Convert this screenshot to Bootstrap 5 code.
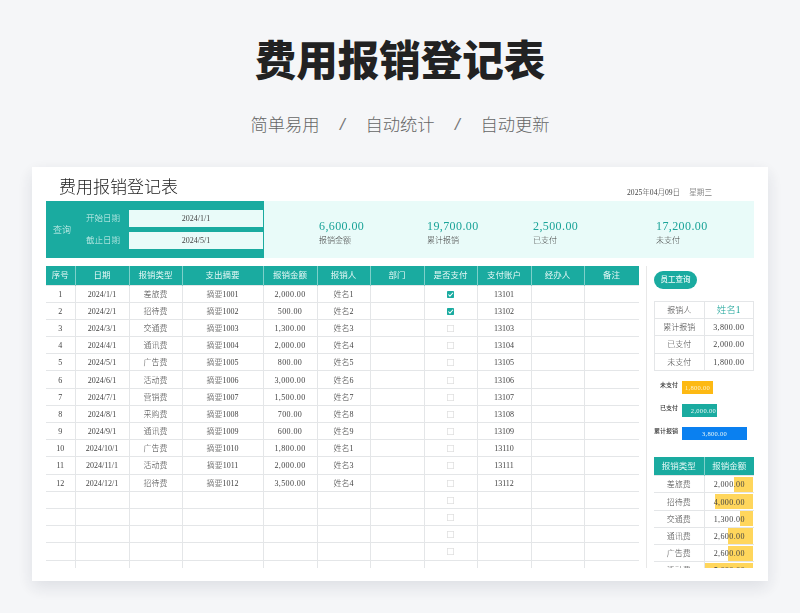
<!DOCTYPE html>
<html lang="zh-CN">
<head>
<meta charset="utf-8">
<title>费用报销登记表</title>
<link rel="stylesheet" href="https://cdn.jsdelivr.net/npm/bootstrap@5.3.0/dist/css/bootstrap.min.css">
<style>
html,body{height:100%;overflow:hidden}
body{background:#f5f6f8;font-family:"Liberation Serif","Noto Sans CJK SC",serif;color:#444;font-weight:300}
.hero{height:167px;text-align:center;font-family:"Noto Sans CJK SC","Liberation Sans",sans-serif}
.hero-title{font-size:41.5px;line-height:50px;font-weight:900;color:#222;padding-top:33px;margin:0;height:83px}
.hero-sub{font-size:17.3px;line-height:24px;color:#666;margin-top:29px;gap:20.5px;font-weight:300}
.hero-slash{font-style:italic;font-family:"Liberation Sans",sans-serif;color:#777;font-weight:400}
.sheet{margin:0 32px;height:414px;background:#fff;box-shadow:0 6px 16px rgba(60,70,90,.13);padding:0 14px;opacity:.999}
.sheet-head{height:34px}
.sheet-title{font-size:17px;line-height:24px;color:#222;margin:9px 0 0 13px;font-weight:300}
.sheet-date{font-size:7.6px;margin:20px 42px 0 0;color:#444;gap:9px}
.band{height:57px;background:#e9fbf9}
.query{width:218px;background:#1aaba0;color:#d5f3ef;font-size:9px;padding:0 1px 0 7px}
.query-word{width:26px;padding-top:2px}
.query-fields{gap:5px;flex:1}
.query-label{width:50px;text-align:right;padding-right:9px;font-size:8.5px}
.query-input{flex:1;height:17px;background:#e9fbf9;color:#444;font-size:8px;line-height:17px;text-align:center}
.stat-wrap{flex:1;display:grid;grid-template-columns:108px 106px 123px 1fr;padding-left:55px;padding-top:18px}
.stat-num{font-size:12px;line-height:14px;color:#1aa398;letter-spacing:.4px}
.stat-cap{font-size:8px;line-height:12px;margin-top:2px;color:#444}
.body-row{margin-top:8px;height:302px}
.left-pane{width:593px;height:302px;overflow:hidden}
.right-pane{margin-left:7px;flex:1;border-left:1px solid #e8e8e8;padding-left:7px;height:302px;overflow:hidden}
.tbl{table-layout:fixed;margin:0;border-collapse:collapse;width:100%;font-size:8px;color:#444}
.tbl>*>tr>*{padding:1px 0 0;height:17.2px;line-height:15px;text-align:center;vertical-align:middle;border:1px solid #e4e6e8;background:#fff;color:#444;box-shadow:none;font-weight:300;white-space:nowrap}
.tbl>thead>tr>th{background:#1aaba0;color:#e6f8f6;height:19px;font-size:8.5px;border-color:#7fd0ca;border-top:0;border-bottom:0;padding:0;font-weight:400}
.tbl>*>tr>*:first-child{border-left:0}
.tbl>*>tr>*:last-child{border-right:none}
.left-pane .tbl>*>tr>*:last-child{border-right:1px solid #e4e6e8}
.amt{letter-spacing:.4px}
.ck{display:block;margin:auto;width:7px;height:7px}
.pill{width:43px;height:18px;border-radius:9px;background:#1aaba0;color:#eafaf8;font-size:7.5px;line-height:18px;text-align:center;margin-top:5px;font-weight:500}
.panel-tbl{margin-top:12px;width:100%}
.panel-tbl.tbl>*>tr>*:first-child{border-left:1px solid #e4e6e8}
.panel-tbl.tbl>*>tr>*:last-child{border-right:1px solid #e4e6e8}
.accent{color:#1aa398!important;font-size:9.5px}
.bars{margin-top:10px;gap:10px;height:76px}
.bar-row{height:13px;font-size:6px;color:#333;font-weight:500}
.bar-lab{width:24px;text-align:right;margin-right:4px;white-space:nowrap}
.bar{height:13px;line-height:13px;text-align:center;color:#e9f7f6;font-weight:300;font-size:6.5px;letter-spacing:.3px}
.b-y{width:31px;background:#fdb913;color:#fff3cf}
.b-t{width:35px;background:#1aaba0;text-align:right;padding-right:1px}
.b-b{width:65px;background:#0a80f0}
.type-tbl{margin-top:0;width:100%}
.type-tbl>thead>tr>th{border-color:#7fd0ca}
.data-cell{position:relative}
.data-fill{position:absolute;top:.5px;bottom:.5px;right:1px;background:#ffd65c}
.data-num{position:relative}
</style>
</head>
<body>
<header class="hero">
  <h1 class="hero-title">费用报销登记表</h1>
  <div class="hero-sub d-flex justify-content-center"><span>简单易用</span><span class="hero-slash">/</span><span>自动统计</span><span class="hero-slash">/</span><span>自动更新</span></div>
</header>
<main class="sheet">
  <div class="sheet-head d-flex justify-content-between">
    <div class="sheet-title">费用报销登记表</div>
    <div class="sheet-date d-flex"><span>2025年04月09日</span><span>星期三</span></div>
  </div>
  <section class="band d-flex">
    <div class="query d-flex align-items-center">
      <div class="query-word">查询</div>
      <div class="query-fields d-flex flex-column">
        <div class="d-flex align-items-center"><div class="query-label">开始日期</div><div class="query-input">2024/1/1</div></div>
        <div class="d-flex align-items-center"><div class="query-label">截止日期</div><div class="query-input">2024/5/1</div></div>
      </div>
    </div>
    <div class="stat-wrap">
      <div><div class="stat-num">6,600.00</div><div class="stat-cap">报销金额</div></div>
      <div><div class="stat-num">19,700.00</div><div class="stat-cap">累计报销</div></div>
      <div><div class="stat-num">2,500.00</div><div class="stat-cap">已支付</div></div>
      <div><div class="stat-num">17,200.00</div><div class="stat-cap">未支付</div></div>
    </div>
  </section>
  <div class="body-row d-flex">
    <div class="left-pane">
      <table class="table tbl">
        <colgroup><col style="width:29px"><col style="width:54px"><col style="width:53px"><col style="width:81px"><col style="width:54px"><col style="width:53px"><col style="width:54px"><col style="width:53px"><col style="width:54px"><col style="width:53px"><col style="width:55px"></colgroup>
        <thead><tr><th>序号</th><th>日期</th><th>报销类型</th><th>支出摘要</th><th>报销金额</th><th>报销人</th><th>部门</th><th>是否支付</th><th>支付账户</th><th>经办人</th><th>备注</th></tr></thead>
        <tbody>
          <tr><td>1</td><td>2024/1/1</td><td>差旅费</td><td>摘要1001</td><td class="amt">2,000.00</td><td>姓名1</td><td></td><td><svg class="ck" viewBox="0 0 10 10"><rect width="10" height="10" rx="1" fill="#1aaba0"/><path d="M2 5l2.2 2.4L8.5 2.5" fill="none" stroke="#fff" stroke-width="1.5"/></svg></td><td>13101</td><td></td><td></td></tr>
          <tr><td>2</td><td>2024/2/1</td><td>招待费</td><td>摘要1002</td><td class="amt">500.00</td><td>姓名2</td><td></td><td><svg class="ck" viewBox="0 0 10 10"><rect width="10" height="10" rx="1" fill="#1aaba0"/><path d="M2 5l2.2 2.4L8.5 2.5" fill="none" stroke="#fff" stroke-width="1.5"/></svg></td><td>13102</td><td></td><td></td></tr>
          <tr><td>3</td><td>2024/3/1</td><td>交通费</td><td>摘要1003</td><td class="amt">1,300.00</td><td>姓名3</td><td></td><td><svg class="ck" viewBox="0 0 10 10"><rect x=".5" y=".5" width="9" height="9" fill="#fff" stroke="#ddd"/></svg></td><td>13103</td><td></td><td></td></tr>
          <tr><td>4</td><td>2024/4/1</td><td>通讯费</td><td>摘要1004</td><td class="amt">2,000.00</td><td>姓名4</td><td></td><td><svg class="ck" viewBox="0 0 10 10"><rect x=".5" y=".5" width="9" height="9" fill="#fff" stroke="#ddd"/></svg></td><td>13104</td><td></td><td></td></tr>
          <tr><td>5</td><td>2024/5/1</td><td>广告费</td><td>摘要1005</td><td class="amt">800.00</td><td>姓名5</td><td></td><td><svg class="ck" viewBox="0 0 10 10"><rect x=".5" y=".5" width="9" height="9" fill="#fff" stroke="#ddd"/></svg></td><td>13105</td><td></td><td></td></tr>
          <tr><td>6</td><td>2024/6/1</td><td>活动费</td><td>摘要1006</td><td class="amt">3,000.00</td><td>姓名6</td><td></td><td><svg class="ck" viewBox="0 0 10 10"><rect x=".5" y=".5" width="9" height="9" fill="#fff" stroke="#ddd"/></svg></td><td>13106</td><td></td><td></td></tr>
          <tr><td>7</td><td>2024/7/1</td><td>营销费</td><td>摘要1007</td><td class="amt">1,500.00</td><td>姓名7</td><td></td><td><svg class="ck" viewBox="0 0 10 10"><rect x=".5" y=".5" width="9" height="9" fill="#fff" stroke="#ddd"/></svg></td><td>13107</td><td></td><td></td></tr>
          <tr><td>8</td><td>2024/8/1</td><td>采购费</td><td>摘要1008</td><td class="amt">700.00</td><td>姓名8</td><td></td><td><svg class="ck" viewBox="0 0 10 10"><rect x=".5" y=".5" width="9" height="9" fill="#fff" stroke="#ddd"/></svg></td><td>13108</td><td></td><td></td></tr>
          <tr><td>9</td><td>2024/9/1</td><td>通讯费</td><td>摘要1009</td><td class="amt">600.00</td><td>姓名9</td><td></td><td><svg class="ck" viewBox="0 0 10 10"><rect x=".5" y=".5" width="9" height="9" fill="#fff" stroke="#ddd"/></svg></td><td>13109</td><td></td><td></td></tr>
          <tr><td>10</td><td>2024/10/1</td><td>广告费</td><td>摘要1010</td><td class="amt">1,800.00</td><td>姓名1</td><td></td><td><svg class="ck" viewBox="0 0 10 10"><rect x=".5" y=".5" width="9" height="9" fill="#fff" stroke="#ddd"/></svg></td><td>13110</td><td></td><td></td></tr>
          <tr><td>11</td><td>2024/11/1</td><td>活动费</td><td>摘要1011</td><td class="amt">2,000.00</td><td>姓名3</td><td></td><td><svg class="ck" viewBox="0 0 10 10"><rect x=".5" y=".5" width="9" height="9" fill="#fff" stroke="#ddd"/></svg></td><td>13111</td><td></td><td></td></tr>
          <tr><td>12</td><td>2024/12/1</td><td>招待费</td><td>摘要1012</td><td class="amt">3,500.00</td><td>姓名4</td><td></td><td><svg class="ck" viewBox="0 0 10 10"><rect x=".5" y=".5" width="9" height="9" fill="#fff" stroke="#ddd"/></svg></td><td>13112</td><td></td><td></td></tr>
          <tr><td></td><td></td><td></td><td></td><td></td><td></td><td></td><td><svg class="ck" viewBox="0 0 10 10"><rect x=".5" y=".5" width="9" height="9" fill="#fff" stroke="#ddd"/></svg></td><td></td><td></td><td></td></tr>
          <tr><td></td><td></td><td></td><td></td><td></td><td></td><td></td><td><svg class="ck" viewBox="0 0 10 10"><rect x=".5" y=".5" width="9" height="9" fill="#fff" stroke="#ddd"/></svg></td><td></td><td></td><td></td></tr>
          <tr><td></td><td></td><td></td><td></td><td></td><td></td><td></td><td><svg class="ck" viewBox="0 0 10 10"><rect x=".5" y=".5" width="9" height="9" fill="#fff" stroke="#ddd"/></svg></td><td></td><td></td><td></td></tr>
          <tr><td></td><td></td><td></td><td></td><td></td><td></td><td></td><td><svg class="ck" viewBox="0 0 10 10"><rect x=".5" y=".5" width="9" height="9" fill="#fff" stroke="#ddd"/></svg></td><td></td><td></td><td></td></tr>
          <tr><td></td><td></td><td></td><td></td><td></td><td></td><td></td><td></td><td></td><td></td><td></td></tr>
        </tbody>
      </table>
    </div>
    <aside class="right-pane">
      <div class="pill">员工查询</div>
      <table class="table tbl panel-tbl">
        <tbody>
          <tr><td>报销人</td><td class="accent">姓名1</td></tr>
          <tr><td>累计报销</td><td class="amt">3,800.00</td></tr>
          <tr><td>已支付</td><td class="amt">2,000.00</td></tr>
          <tr><td>未支付</td><td class="amt">1,800.00</td></tr>
        </tbody>
      </table>
      <div class="bars d-flex flex-column">
        <div class="bar-row d-flex"><div class="bar-lab">未支付</div><div class="bar b-y">1,800.00</div></div>
        <div class="bar-row d-flex"><div class="bar-lab">已支付</div><div class="bar b-t">2,000.00</div></div>
        <div class="bar-row d-flex"><div class="bar-lab">累计报销</div><div class="bar b-b">3,800.00</div></div>
      </div>
      <table class="table tbl type-tbl">
        <thead><tr><th>报销类型</th><th>报销金额</th></tr></thead>
        <tbody>
          <tr><td>差旅费</td><td class="data-cell amt"><span class="data-fill" style="width:19px"></span><span class="data-num">2,000.00</span></td></tr>
          <tr><td>招待费</td><td class="data-cell amt"><span class="data-fill" style="width:38px"></span><span class="data-num">4,000.00</span></td></tr>
          <tr><td>交通费</td><td class="data-cell amt"><span class="data-fill" style="width:13px"></span><span class="data-num">1,300.00</span></td></tr>
          <tr><td>通讯费</td><td class="data-cell amt"><span class="data-fill" style="width:25px"></span><span class="data-num">2,600.00</span></td></tr>
          <tr><td>广告费</td><td class="data-cell amt"><span class="data-fill" style="width:25px"></span><span class="data-num">2,600.00</span></td></tr>
          <tr><td>活动费</td><td class="data-cell amt"><span class="data-fill" style="width:48px"></span><span class="data-num">5,000.00</span></td></tr>
        </tbody>
      </table>
    </aside>
  </div>
</main>
<script src="https://cdn.jsdelivr.net/npm/bootstrap@5.3.0/dist/js/bootstrap.bundle.min.js"></script>
</body>
</html>
